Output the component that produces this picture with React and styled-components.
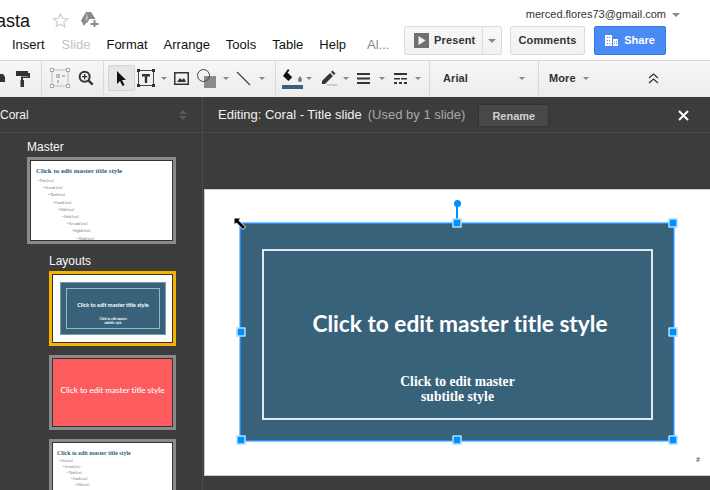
import React from "react";
import styled, { createGlobalStyle } from "styled-components";

const Global = createGlobalStyle`
  html, body { margin: 0; padding: 0; background: #3c3c3c; }
  body { font-family: "Liberation Sans", Arial, sans-serif; }
  * { box-sizing: border-box; }
`;
const Page = styled.div`
  width: 710px; height: 490px; overflow: hidden; display: flex; flex-direction: column; background: #3c3c3c;
`;
const Header = styled.header`
  height: 60px; background: #fff; display: flex; justify-content: space-between; flex: none;
`;
const HeaderLeft = styled.div`display: flex; flex-direction: column;`;
const TitleRow = styled.div`
  height: 37px; display: flex; align-items: flex-start; padding-top: 11px; margin-left: -4px;
`;
const DocTitle = styled.span`font-size: 18px; line-height: 21px; color: #111; width: 56px;`;
const TitleIcon = styled.svg`display: block; margin-right: ${p => p.$gap || 0}px; margin-top: ${p => p.$top || 0}px;`;
const MenuBar = styled.nav`display: flex; padding-left: 12px; height: 23px;`;
const MenuItem = styled.span`
  font-size: 13px; line-height: 15px; color: ${p => p.$muted ? "#c4c4c4" : p.$soft ? "#888" : "#111"};
  margin-right: ${p => p.$gap}px; white-space: nowrap;
`;
const HeaderRight = styled.div`display: flex; flex-direction: column; align-items: flex-end; padding-right: 44px;`;
const Account = styled.div`
  display: flex; align-items: center; gap: 6px; font-size: 11px; line-height: 13px; color: #333; margin: 8px -14px 5px 0;
`;
const Caret = styled.i`
  display: block; width: 0; height: 0; border-left: ${p => p.$s || 3.5}px solid transparent; border-right: ${p => p.$s || 3.5}px solid transparent;
  border-top: ${p => p.$s || 3.5}px solid ${p => p.$c || "#888"}; flex: none;
`;
const Actions = styled.div`display: flex; gap: 8px; align-items: flex-start;`;
const GreyBtn = styled.div`
  height: 29px; border: 1px solid #dcdcdc; border-radius: 2px; background: linear-gradient(#f8f8f8, #f1f1f1);
  display: flex; align-items: center; font-size: 11px; font-weight: 700; color: #333; letter-spacing: .15px; padding-bottom: 1px;
`;
const PresentBtn = styled(GreyBtn)`width: 98px; padding-bottom: 0;`;
const PresentMain = styled.div`display: flex; align-items: center; gap: 5px; padding: 0 0 1px 9px; width: 78px; height: 100%; border-right: 1px solid #dcdcdc;`;
const PresentDrop = styled.div`flex: 1; display: flex; justify-content: center;`;
const CommentsBtn = styled(GreyBtn)`width: 75px; justify-content: center;`;
const ShareBtn = styled.div`
  width: 72px; height: 29px; margin-left: 1px; background: #4a8af4; border: 1px solid #3079ed; border-radius: 2px; display: flex; align-items: center; justify-content: center; gap: 6px;
  color: #fff; font-size: 11px; font-weight: 700; padding-bottom: 1px;
`;
const Toolbar = styled.div`
  height: 37px; flex: none; background: linear-gradient(#f7f7f7, #ececec); border-top: 1px solid #d9d9d9; display: flex; align-items: center; margin-left: -1px;
`;
const Group = styled.div`
  height: 100%; width: ${p => p.$w}px; flex: none; border-right: ${p => p.$last ? "0" : "1px solid #d9d9d9"}; display: flex; align-items: center; padding: 0 0 2px ${p => p.$pl || 0}px; gap: ${p => p.$gap || 0}px;
`;
const Tool = styled.div`
  width: ${p => p.$w || 24}px; height: 26px; flex: none; display: flex; align-items: center; justify-content: center; margin-left: ${p => p.$ml || 0}px;
  ${p => p.$on && `background:#e6e6e6;border:1px solid #d4d4d4;border-radius:2px;`}
`;
const FontArrow = styled.div`flex: 1; display: flex; justify-content: flex-end; padding-right: 13px;`;
const ToolText = styled.span`font-size: 11px; font-weight: 700; color: #333; letter-spacing: .1px;`;
const Body = styled.main`flex: 1; display: flex; min-height: 0;`;
const Side = styled.aside`width: 203px; flex: none; border-right: 1px solid #4c4c4c; display: flex; flex-direction: column; overflow: hidden;`;
const SideHead = styled.div`
  height: 36px; flex: none; display: flex; align-items: center; justify-content: space-between; padding: 0 15px 0 0; border-bottom: 1px solid #474747;
  color: #f2f2f2; font-size: 12px;
`;
const Sort = styled.div`display: flex; flex-direction: column; gap: 2px;`;
const SortUp = styled.i`display:block;width:0;height:0;border-left:4px solid transparent;border-right:4px solid transparent;border-bottom:4px solid #5a5a5a;`;
const SortDown = styled(SortUp)`border-bottom:0;border-top:4px solid #5a5a5a;`;
const Label = styled.div`color: #fafafa; font-size: 12px; line-height: 14px; margin: ${p => p.$m}; `;
const Thumb = styled.div`
  width: ${p => p.$w}px; height: ${p => p.$h}px; flex: none; margin: ${p => p.$m}; overflow: hidden; position: relative;
  border: 3px solid ${p => p.$sel ? "#f6b400" : "#8a8a8a"}; outline: 1px solid #333; outline-offset: -4px; background: ${p => p.$bg || "#fff"}; padding: ${p => p.$pad || "0"};
`;
const ThumbTitle = styled.div`font-family: "Liberation Serif", serif; font-weight: 700; color: #2d5c7a; font-size: ${p => p.$s}px; line-height: 10px; white-space: nowrap; margin-bottom: ${p => p.$mb || 0}px;`;
const Level = styled.div`
  font-family: "Liberation Serif", serif; font-size: ${p => p.$small ? 3 : 3.4}px; color: #666; line-height: ${p => p.$small ? 6 : 7.2}px; padding-left: ${p => p.$i}px; white-space: nowrap;
`;
const Mini = styled.div`
  margin: 8px 0 0 8px; width: 106px; height: 53px; background: #38627a; border: 1px solid #7e9aaa; display: flex; padding: 5px; 
`;
const MiniFrame = styled.div`
  flex: 1; border: 1px solid #9fb5c2; display: flex; flex-direction: column; align-items: center; color: #fff; font-weight: 700;
`;
const MiniTitle = styled.div`font-family: Lato, sans-serif; font-size: 5.5px; line-height: 7px; margin-top: 13px; white-space: nowrap;`;
const MiniSub = styled.div`font-family: "Liberation Serif", serif; font-size: 3.3px; line-height: 3.5px; margin-top: 9px; text-align: center;`;
const RedTitle = styled.div`
  height: 100%; padding-bottom: 6px; display: flex; align-items: center; justify-content: center; color: #fff; font-family: Lato, sans-serif; font-size: 8.1px; font-weight: 500; white-space: nowrap; font-variant-ligatures: none;
`;
const Editor = styled.section`flex: 1; display: flex; flex-direction: column; min-width: 0;`;
const EditBar = styled.div`
  height: 36px; flex: none; border-bottom: 1px solid #474747; display: flex; align-items: center; padding: 0 21px 0 15px; color: #f2f2f2; font-size: 13px;
`;
const Used = styled.span`color: #a8a8a8; margin-left: 6px;`;
const RenameBtn = styled.div`
  width: 71px; height: 23px; margin-left: 13px; background: #484848; border: 1px solid #333; border-radius: 2px; display: flex; align-items: center; justify-content: center;
  color: #d0d0d0; font-size: 11px; font-weight: 700; margin-top: 2px;
`;
const CloseBtn = styled.svg`margin-left: auto; display: block; margin-top: 2px;`;
const Slide = styled.div`
  margin: 56px 0 0 1px; height: 287px; width: 520px; background: #fff; border-top: 1px solid #ccc; border-bottom: 1px solid #ccc; border-left: 1px solid #ccc; position: relative; flex: none; padding: 33px 0 0 35px;
`;
const Teal = styled.div`
  width: 434px; height: 218px; background: #38627a; padding: 26px 21px 21px 22px; position: relative;
  outline: 1px solid #1e90ff; outline-offset: -1px; box-shadow: 0 0 0 1px #8fc5ff;
`;
const Frame = styled.div`
  height: 171px; border: 2px solid #e2e7ea; display: flex; flex-direction: column; align-items: center; color: #fff;
`;
const BigTitle = styled.div`font-family: Lato, sans-serif; font-weight: 700; font-size: 22.7px; line-height: 30px; margin: 58px 0 0 5px; white-space: nowrap; font-variant-ligatures: none;`;
const SubTitle = styled.div`font-family: "Liberation Serif", serif; font-weight: 700; font-size: 13.6px; line-height: 15px; margin-top: 35px; text-align: center;`;
const Handle = styled.div`
  position: absolute; left: ${p => p.$x}px; top: ${p => p.$y}px; width: 9px; height: 9px; background: #0091ff; border: 1px solid #fff; transform: translate(-50%, -50%);
`;
const Stem = styled.div`position: absolute; left: 216px; top: -17px; width: 2px; height: 18px; background: #0091ff;`;
const Rot = styled.div`position: absolute; left: 213.5px; top: -23px; width: 7px; height: 7px; border-radius: 50%; background: #0091ff;`;
const Cursor = styled.svg`position: absolute; left: -7px; top: -6px; display: block;`;
const PageNo = styled.span`position: absolute; left: 491px; top: 266px; font-size: 7px; line-height: 8px; color: #38627a; font-weight: 700;`;

const levels = [["First level",2],["Second level",7],["Third level",12],["Fourth level",17],["Fifth level",22],["Sixth level",26],["Seventh level",31],["Eighth level",36],["Ninth level",41]];

const Icon = ({ w = 18, h = 18, children }) => <svg width={w} height={h} viewBox={`0 0 ${w} ${h}`} style={{display:"block",flex:"none"}}>{children}</svg>;

export default function App() {
  return (
    <Page>
      <Global />
      <Header>
        <HeaderLeft>
          <TitleRow>
            <DocTitle>asta</DocTitle>
            <TitleIcon $top={1} $gap={12} width="17" height="17" viewBox="0 0 24 24"><path d="M12 2.500l2.900 6.400 7 .8-5.200 4.700 1.400 6.900L12 17l-6.100 3.300 1.400-6.900L2.100 9.700l7-.8z" fill="none" stroke="#ccc" strokeWidth="1.600"/></TitleIcon>
            <TitleIcon $top={1} width="18" height="15" viewBox="0 0 18 15"><path d="M5 0h5l4.500 7H8.500L6 11H5L3 14 0 8.500z" fill="#8a8a8a"/><path d="M5.500 1l1.500 5-2.500 4z" fill="#c8c8c8"/><path d="M12.500 8h2v3h3v2h-3v2h-2v-2h-3v-2h3z" fill="#8a8a8a"/></TitleIcon>
          </TitleRow>
          <MenuBar>
            <MenuItem $gap={17}>Insert</MenuItem>
            <MenuItem $gap={16} $muted>Slide</MenuItem>
            <MenuItem $gap={16}>Format</MenuItem>
            <MenuItem $gap={16}>Arrange</MenuItem>
            <MenuItem $gap={16}>Tools</MenuItem>
            <MenuItem $gap={16}>Table</MenuItem>
            <MenuItem $gap={21}>Help</MenuItem>
            <MenuItem $gap={0} $soft>Al...</MenuItem>
          </MenuBar>
        </HeaderLeft>
        <HeaderRight>
          <Account>merced.flores73@gmail.com<Caret $s={4} /></Account>
          <Actions>
            <PresentBtn>
              <PresentMain>
                <Icon w={15} h={15}><rect width="15" height="15" fill="#707070"/><path d="M4.500 3l7 4.500-7 4.500z" fill="#f2f2f2"/></Icon>
                Present
              </PresentMain>
              <PresentDrop><Caret $s={4} /></PresentDrop>
            </PresentBtn>
            <CommentsBtn>Comments</CommentsBtn>
            <ShareBtn>
              <Icon w={13} h={11}><path d="M0 0h7v11H0zM8 4h5v7H8z" fill="#fff"/><path d="M2 2h1v1H2zM4 2h1v1H4zM2 5h1v1H2zM4 5h1v1H4zM2 8h1v1H2zM4 8h1v1H4zM9 6h1v1H9zM11 6h1v1h-1zM9 8h1v1H9zM11 8h1v1h-1z" fill="#4a8af4"/></Icon>
              Share
            </ShareBtn>
          </Actions>
        </HeaderRight>
      </Header>
      <Toolbar>
        <Group $w={43}>
          <Tool $w={6}><Icon w={5} h={10}><path d="M0 1h3l2 3v5H0z" fill="#333"/></Icon></Tool>
          <Tool $w={35}><Icon w={15} h={17}><path d="M1 1h12v5H1z" fill="#333"/><path d="M13 3h2v5H8v3H6V6.500h7z" fill="#333"/><rect x="5.500" y="10" width="3.500" height="7" fill="#333"/></Icon></Tool>
        </Group>
        <Group $w={62} $pl={6} $gap={2}>
          <Tool><Icon w={20} h={20}><rect x="2" y="2" width="16" height="16" fill="none" stroke="#bbb"/><g fill="#fff" stroke="#aaa"><rect x="0.500" y="0.500" width="3" height="3"/><rect x="16.500" y="0.500" width="3" height="3"/><rect x="0.500" y="16.500" width="3" height="3"/><rect x="16.500" y="16.500" width="3" height="3"/></g><path d="M6 6h4v4H6zM12 7h3v2h-3zM7 12h2v3H7z" fill="#bbb"/></Icon></Tool>
          <Tool $w={23}><svg width="16" height="16" viewBox="0 0 24 24" style={{display:"block"}}><circle cx="10" cy="10" r="7.500" fill="none" stroke="#333" strokeWidth="3"/><path d="M15.500 15.500L22 22" stroke="#333" strokeWidth="3.500"/><path d="M10 6v8M6 10h8" stroke="#333" strokeWidth="2"/></svg></Tool>
        </Group>
        <Group $w={172} $pl={4}>
          <Tool $w={27} $on><Icon w={11} h={15}><path d="M1 0l9 9H6l2.500 5-2 1L4 10l-3 3z" fill="#111"/></Icon></Tool>
          <Tool $w={21}><Icon w={18} h={18}><rect x="1.500" y="1.500" width="15" height="15" fill="none" stroke="#444"/><g fill="#333"><rect x="0" y="0" width="3" height="3"/><rect x="15" y="0" width="3" height="3"/><rect x="0" y="15" width="3" height="3"/><rect x="15" y="15" width="3" height="3"/></g><path d="M5 5h8v2.500h-2.800V14H7.800V7.500H5z" fill="#333"/></Icon></Tool>
          <Tool $w={15}><Caret /></Tool>
          <Tool $w={21}><Icon w={15} h={13}><rect x=".75" y=".75" width="13.500" height="11.500" fill="none" stroke="#333" strokeWidth="1.500"/><path d="M3 10l3-4 2 2 2-2 2 4z" fill="#333"/></Icon></Tool>
          <Tool $w={29}><Icon w={19} h={19}><rect x="7" y="7" width="12" height="12" fill="#8a8a8a"/><circle cx="6.500" cy="6.500" r="6" fill="none" stroke="#444"/></Icon></Tool>
          <Tool $w={9}><Caret /></Tool>
          <Tool $w={26}><Icon w={15} h={15}><path d="M1 1l13 13" stroke="#444" strokeWidth="1.300"/></Icon></Tool>
          <Tool $w={12}><Caret /></Tool>
        </Group>
        <Group $w={154} $pl={4}>
          <Tool $w={26}><Icon w={22} h={21}><path d="M6 1l1.500 1.500L5.500 4.500 10 9h.5l-4 4L1 8z" fill="#111"/><path d="M18 8s2 2.500 2 4a2 2 0 0 1-4 0c0-1.500 2-4 2-4z" fill="#777"/><rect y="17" width="21" height="4" fill="#38627a"/></Icon></Tool>
          <Tool $w={6}><Caret /></Tool>
          <Tool $w={25} $ml={4}><Icon w={16} h={16}><path d="M1 11L9 3l3 3-8 8H1z M10 2l1.500-1.500 3 3L13 5z" fill="#333"/><path d="M6 15h10" stroke="#aaa"/></Icon></Tool>
          <Tool $w={10}><Caret /></Tool>
          <Tool $w={24}><Icon w={13} h={11}><path d="M0 0h13v2H0zM0 4.500h13v2H0zM0 9h13v2H0z" fill="#333"/></Icon></Tool>
          <Tool $w={13}><Caret /></Tool>
          <Tool $w={24}><Icon w={13} h={11}><path d="M0 0h13v2H0zM0 5h6v1.500H0zM7 5h6v1.500H7zM0 9h3v2H0zM5 9h3v2H5zM10 9h3v2h-3z" fill="#333"/></Icon></Tool>
          <Tool $w={12}><Caret /></Tool>
        </Group>
        <Group $w={109} $pl={13}>
          <ToolText>Arial</ToolText>
          <FontArrow><Caret /></FontArrow>
        </Group>
        <Group $w={160} $pl={10} $last>
          <ToolText>More</ToolText>
          <Tool $w={20}><Caret /></Tool>
          <Tool $w={116}><Icon w={11} h={11}><path d="M1 5l4.500-4L10 5M1 10l4.500-4L10 10" fill="none" stroke="#333" strokeWidth="1.300"/></Icon></Tool>
        </Group>
      </Toolbar>
      <Body>
        <Side>
          <SideHead>
            Coral
            <Sort><SortUp /><SortDown /></Sort>
          </SideHead>
          <Label $m="7px 0 3px 27px">Master</Label>
          <Thumb $w={149} $h={87} $m="0 0 10px 27px" $pad="6px 0 0 6px">
            <ThumbTitle $s={6.9} $mb={2}>Click to edit master title style</ThumbTitle>
            {levels.map(([t,i]) => <Level key={t} $i={i}>• {t}</Level>)}
          </Thumb>
          <Label $m="0 0 3px 49px">Layouts</Label>
          <Thumb $w={127} $h={75} $m="0 0 9px 49px" $sel>
            <Mini>
              <MiniFrame>
                <MiniTitle>Click to edit master title style</MiniTitle>
                <MiniSub>Click to edit master<br />subtitle style</MiniSub>
              </MiniFrame>
            </Mini>
          </Thumb>
          <Thumb $w={127} $h={75} $m="0 0 9px 49px" $bg="#fc5c5e">
            <RedTitle>Click to edit master title style</RedTitle>
          </Thumb>
          <Thumb $w={127} $h={75} $m="0 0 0 49px" $pad="6px 0 0 5px">
            <ThumbTitle $s={5.9}>Click to edit master title style</ThumbTitle>
            {levels.slice(0,5).map(([t], n) => <Level key={t} $small $i={2 + n * 4}>• {t}</Level>)}
          </Thumb>
        </Side>
        <Editor>
          <EditBar>
            Editing: Coral - Title slide
            <Used>(Used by 1 slide)</Used>
            <RenameBtn>Rename</RenameBtn>
            <CloseBtn width="11" height="11" viewBox="0 0 11 11"><path d="M1 1l9 9M10 1l-9 9" stroke="#fff" strokeWidth="2"/></CloseBtn>
          </EditBar>
          <Slide>
            <Teal>
              <Frame>
                <BigTitle>Click to edit master title style</BigTitle>
                <SubTitle>Click to edit master<br />subtitle style</SubTitle>
              </Frame>
              <Stem />
              <Rot />
              <Handle $x={217} $y={0} />
              <Handle $x={433} $y={0} />
              <Handle $x={1} $y={109} />
              <Handle $x={433} $y={109} />
              <Handle $x={1} $y={217} />
              <Handle $x={217} $y={217} />
              <Handle $x={433} $y={217} />
              <Cursor width="14" height="14" viewBox="0 0 14 14"><path d="M1 1h7L6 3.500 12.500 10 10 12.500 3.500 6 1 8z" fill="#000" stroke="#fff" strokeWidth="1"/></Cursor>
            </Teal>
            <PageNo>#</PageNo>
          </Slide>
        </Editor>
      </Body>
    </Page>
  );
}
